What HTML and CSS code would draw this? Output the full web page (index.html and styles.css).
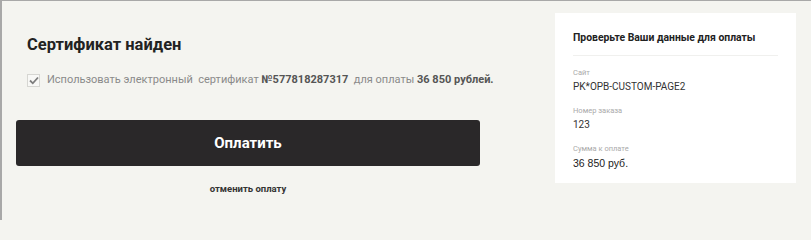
FILE: index.html
```html
<!DOCTYPE html>
<html lang="ru">
<head>
<meta charset="utf-8">
<link rel="stylesheet" href="styles.css">
</head>
<body>
<div class="page">
  <main class="main">
    <h1 class="title">Сертификат найден</h1>
    <label class="check">
      <span class="box"><svg width="10" height="9" viewBox="0 0 10 9"><path d="M1 4.5 L3.8 7.3 L9 1.5" fill="none" stroke="#7d7d7d" stroke-width="1.8"/></svg></span>
      <span class="check-text">Использовать электронный&nbsp; сертификат <b>№577818287317</b>&nbsp; для оплаты <b>36 850 рублей.</b></span>
    </label>
    <button class="pay">Оплатить</button>
    <a class="cancel">отменить оплату</a>
  </main>
  <aside class="card">
    <h2 class="card-title">Проверьте Ваши данные для оплаты</h2>
    <div class="field">
      <div class="label">Сайт</div>
      <div class="value">PK*OPB-CUSTOM-PAGE2</div>
    </div>
    <div class="field">
      <div class="label">Номер заказа</div>
      <div class="value">123</div>
    </div>
    <div class="field">
      <div class="label">Сумма к оплате</div>
      <div class="value sum">36 850 руб.</div>
    </div>
  </aside>
</div>
</body>
</html>
```
FILE: styles.css
```css
html, body { margin: 0; padding: 0; }
html { background: #f4f4f0; }
body {
  width: 811px;
  height: 220px;
  box-sizing: border-box;
  background: #f4f4f0;
  border-top: 1px solid #a8a8a8;
  border-left: 2px solid #a8a8a8;
  font-family: Roboto, "Noto Sans", sans-serif;
  overflow: hidden;
}
.page {
  display: flex;
  align-items: flex-start;
}
.main {
  width: 464px;
  margin-left: 14px;
  display: flex;
  flex-direction: column;
}
.title {
  margin: 33px 0 0 11px;
  font-size: 16.5px;
  font-weight: 700;
  color: #222;
  line-height: 22px;
}
.check {
  display: flex;
  align-items: center;
  margin: 16px 0 0 11px;
  font-size: 11px;
  color: #8a8a8a;
  line-height: 16px;
  white-space: nowrap;
}
.box {
  width: 11px;
  height: 11px;
  border: 1px solid #d6d6d2;
  background: #f8f8f6;
  display: flex;
  align-items: center;
  justify-content: center;
  margin-right: 7px;
  flex: none;
}
.check-text b { color: #555; font-weight: 700; }
.pay {
  margin-top: 32px;
  height: 46px;
  border: 0;
  border-radius: 3px;
  background: #2a2829;
  color: #fff;
  font-family: inherit;
  font-size: 15px;
  font-weight: 700;
}
.cancel {
  margin-top: 17px;
  text-align: center;
  font-size: 9.5px;
  font-weight: 700;
  color: #333;
}
.card {
  margin: 12px 0 0 75px;
  width: 241px;
  height: 170px;
  box-sizing: border-box;
  background: #fff;
  padding: 17px 18px 0 18px;
}
.card-title {
  margin: 0;
  font-size: 10.4px;
  font-weight: 700;
  color: #222;
  line-height: 16px;
  padding-bottom: 9px;
  border-bottom: 1px solid #f0f0ee;
  white-space: nowrap;
}
.field { margin-top: 11px; }
.field + .field { margin-top: 10px; }
.label {
  font-size: 7.5px;
  color: #aaa;
  line-height: 12px;
}
.value {
  font-size: 10px;
  color: #333;
  line-height: 16px;
}
.sum {
  font-family: "Liberation Sans", Arial, sans-serif;
  font-size: 10.5px;
  color: #222;
}
```
